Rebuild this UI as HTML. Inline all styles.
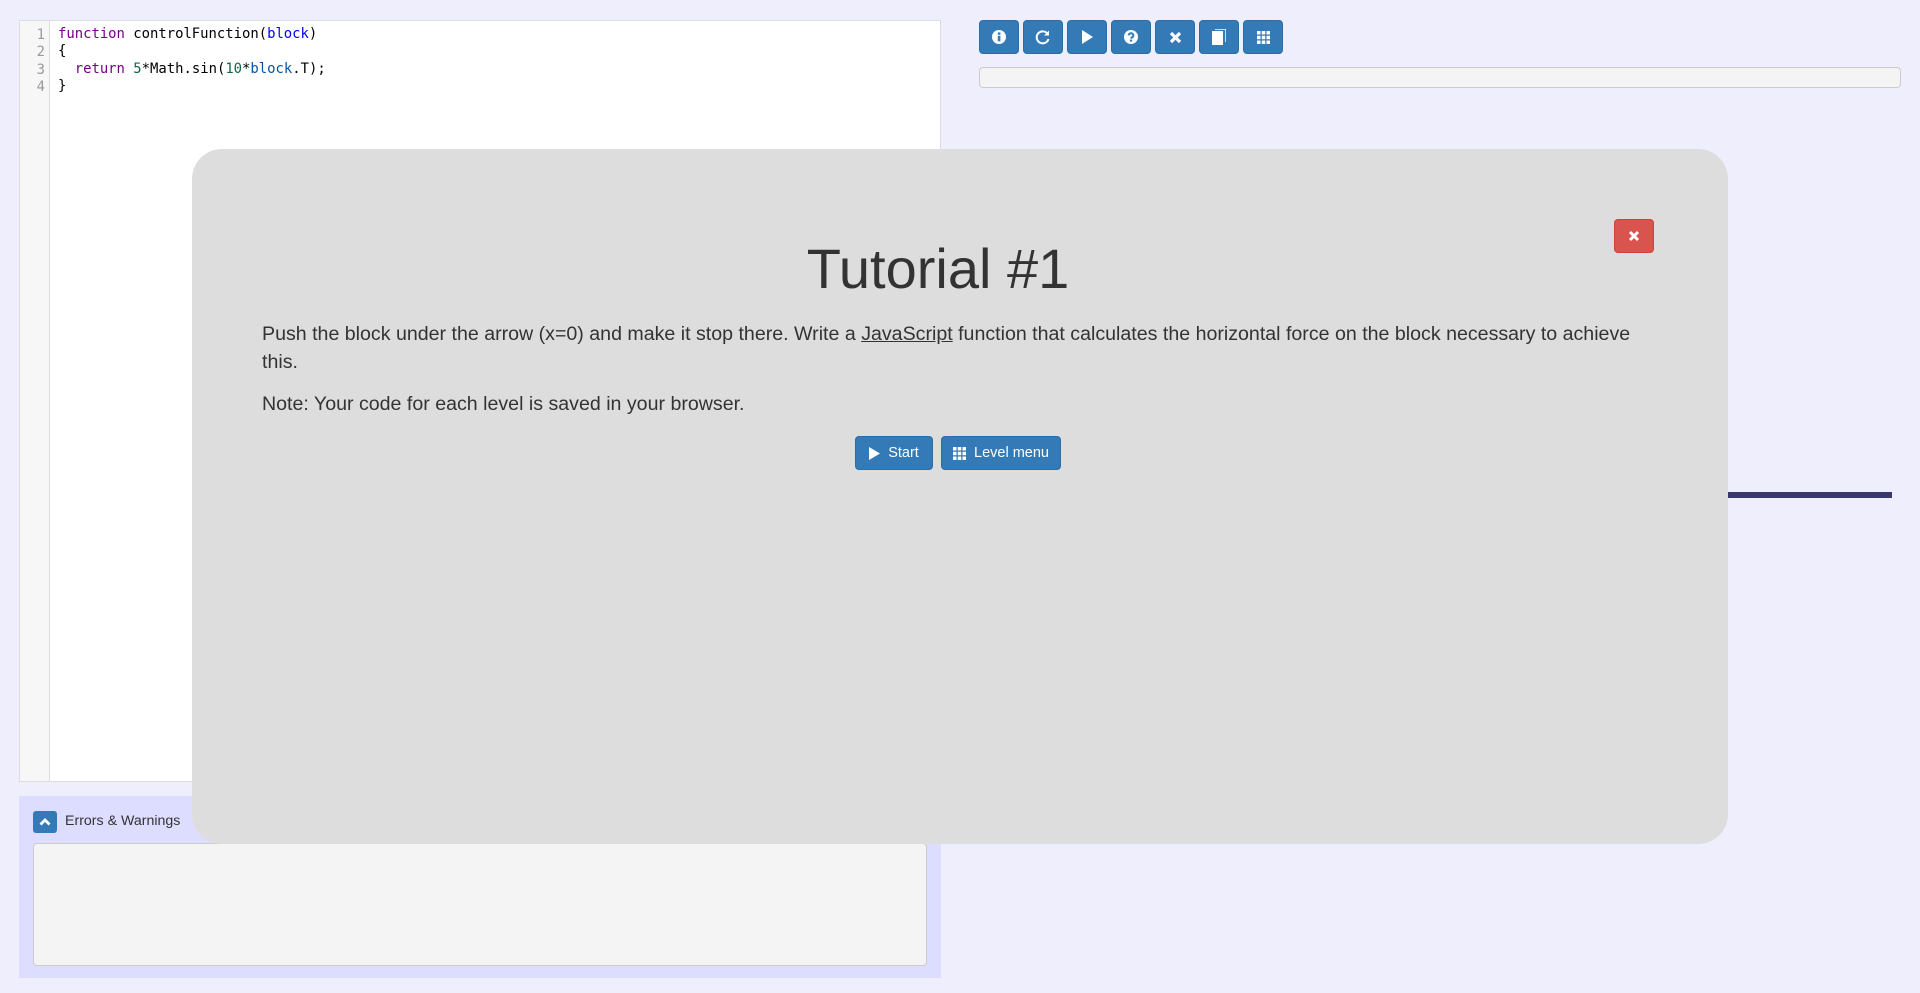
<!DOCTYPE html>
<html><head><meta charset="utf-8"><style>
*{box-sizing:border-box;margin:0;padding:0}
body{width:1920px;height:993px;background:#eeeefd;font-family:"Liberation Sans",Arial,sans-serif;position:relative;overflow:hidden;color:#333}
.editor{position:absolute;left:19px;top:20px;width:922px;height:762px;background:#fff;border:1px solid #ddd}
.gutter{position:absolute;left:0;top:0;bottom:0;width:30px;background:#f7f7f7;border-right:1px solid #ddd;font-family:"DejaVu Sans Mono",monospace;font-size:13.9px;line-height:17.3px;color:#999;text-align:right;padding:6px 4px 0 0}
.code{position:absolute;left:38px;top:5px;font-family:"DejaVu Sans Mono",monospace;font-size:13.9px;line-height:17.3px;color:#000;white-space:pre}
.kw{color:#708}.vr{color:#00f}.nm{color:#164}.v2{color:#05a}
.err{position:absolute;left:19px;top:796px;width:922px;height:182px;background:#ddf}
.err .tb{position:absolute;left:14px;top:15px;width:24px;height:22px;background:#337ab7;border-radius:3px}
.err .lbl{position:absolute;left:46px;top:17px;font-size:14.2px;color:#333}
.err .ta{position:absolute;left:14px;top:47px;width:894px;height:123px;background:#f4f4f4;border:1px solid #ccc;border-radius:4px}
.btn{position:absolute;background:#337ab7;border:1px solid #2e6da4;border-radius:4px;color:#fff;display:flex;align-items:center;justify-content:center}
.prog{position:absolute;left:979px;top:67px;width:922px;height:21px;background:#f4f4f4;border:1px solid #ccc;border-radius:4px}
.bar{position:absolute;left:1700px;top:492px;width:192px;height:6px;background:#39386c}
.modal{position:absolute;left:192px;top:149px;width:1536px;height:695px;background:#dddddd;border-radius:30px}
.close{position:absolute;left:1614px;top:219px;width:40px;height:34px;background:#d9534f;border:1px solid #d43f3a;border-radius:4px;display:flex;align-items:center;justify-content:center}
h1{position:absolute;left:170px;width:1536px;top:234px;text-align:center;font-weight:normal;font-size:56px;line-height:70px;color:#333}
.p{position:absolute;left:262px;width:1400px;font-size:19.6px;line-height:28px;color:#333}
.p u{text-decoration:underline}
.sb{font-size:14.5px;gap:8px}
</style></head><body>
<div class="editor">
<div class="gutter">1<br>2<br>3<br>4</div>
<div class="code"><span class="kw">function</span> controlFunction(<span class="vr">block</span>)
{
  <span class="kw">return</span> <span class="nm">5</span>*Math.sin(<span class="nm">10</span>*<span class="v2">block</span>.T);
}</div>
</div>
<div class="err"><div class="tb"><svg width="24" height="22" viewBox="0 0 24 22"><path d="M7.5 13.5 L12 9 L16.5 13.5" stroke="#fff" stroke-width="2.8" fill="none"/></svg></div><div class="lbl">Errors &amp; Warnings</div><div class="ta"></div></div>

<div class="btn" style="left:979px;top:20px;width:40px;height:34px"><svg width="14" height="14" viewBox="0 0 14 14"><circle cx="7" cy="7" r="7" fill="#fff"/><rect x="5.8" y="5.8" width="2.6" height="5.5" fill="#337ab7"/><rect x="5.8" y="2.4" width="2.6" height="2.4" fill="#337ab7"/></svg></div>
<div class="btn" style="left:1023px;top:20px;width:40px;height:34px"><svg width="16" height="16" viewBox="0 0 16 16"><path d="M13 5.5 A6 6 0 1 0 13.5 10" stroke="#fff" stroke-width="2" fill="none"/><path d="M14 1.5 V6.5 H9 Z" fill="#fff"/></svg></div>
<div class="btn" style="left:1067px;top:20px;width:40px;height:34px"><svg width="12" height="14" viewBox="0 0 12 14"><path d="M1 0 L12 7 L1 14Z" fill="#fff"/></svg></div>
<div class="btn" style="left:1111px;top:20px;width:40px;height:34px"><svg width="14" height="14" viewBox="0 0 14 14"><circle cx="7" cy="7" r="7" fill="#fff"/><path d="M4.6 5.4 A2.4 2.2 0 1 1 7.5 7.6 L7 8.5" stroke="#337ab7" stroke-width="2" fill="none"/><rect x="5.9" y="9.6" width="2.2" height="2" fill="#337ab7"/></svg></div>
<div class="btn" style="left:1155px;top:20px;width:40px;height:34px"><svg width="13" height="13" viewBox="0 0 13 13"><path d="M2 2 L11 11 M11 2 L2 11" stroke="#fff" stroke-width="3.2"/></svg></div>
<div class="btn" style="left:1199px;top:20px;width:40px;height:34px"><svg width="14" height="16" viewBox="0 0 14 16"><rect x="0" y="2" width="11" height="14" fill="#fff"/><path d="M3 0 H14 V13" stroke="#fff" stroke-width="1.5" fill="none"/></svg></div>
<div class="btn" style="left:1243px;top:20px;width:40px;height:34px"><svg width="13" height="13" viewBox="0 0 13 13" fill="#fff"><rect x="0" y="0" width="3.5" height="3.5"/><rect x="4.75" y="0" width="3.5" height="3.5"/><rect x="9.5" y="0" width="3.5" height="3.5"/><rect x="0" y="4.75" width="3.5" height="3.5"/><rect x="4.75" y="4.75" width="3.5" height="3.5"/><rect x="9.5" y="4.75" width="3.5" height="3.5"/><rect x="0" y="9.5" width="3.5" height="3.5"/><rect x="4.75" y="9.5" width="3.5" height="3.5"/><rect x="9.5" y="9.5" width="3.5" height="3.5"/></svg></div>
<div class="prog"></div>
<div class="bar"></div>

<div class="modal"></div>
<div class="close"><svg width="12" height="12" viewBox="0 0 12 12"><path d="M2 2 L10 10 M10 2 L2 10" stroke="#fff" stroke-width="3"/></svg></div>
<h1>Tutorial #1</h1>
<div class="p" style="top:320px">Push the block under the arrow (x=0) and make it stop there. Write a <u>JavaScript</u> function that calculates the horizontal force on the block necessary to achieve this.</div>
<div class="p" style="top:390px">Note: Your code for each level is saved in your browser.</div>
<div class="btn sb" style="left:855px;top:436px;width:78px;height:34px"><svg width="11" height="13" viewBox="0 0 11 13"><path d="M0 0 L11 6.5 L0 13Z" fill="#fff"/></svg>Start</div>
<div class="btn sb" style="left:941px;top:436px;width:120px;height:34px"><svg width="13" height="13" viewBox="0 0 13 13" fill="#fff"><rect x="0" y="0" width="3.5" height="3.5"/><rect x="4.75" y="0" width="3.5" height="3.5"/><rect x="9.5" y="0" width="3.5" height="3.5"/><rect x="0" y="4.75" width="3.5" height="3.5"/><rect x="4.75" y="4.75" width="3.5" height="3.5"/><rect x="9.5" y="4.75" width="3.5" height="3.5"/><rect x="0" y="9.5" width="3.5" height="3.5"/><rect x="4.75" y="9.5" width="3.5" height="3.5"/><rect x="9.5" y="9.5" width="3.5" height="3.5"/></svg>Level menu</div>
</body></html>
